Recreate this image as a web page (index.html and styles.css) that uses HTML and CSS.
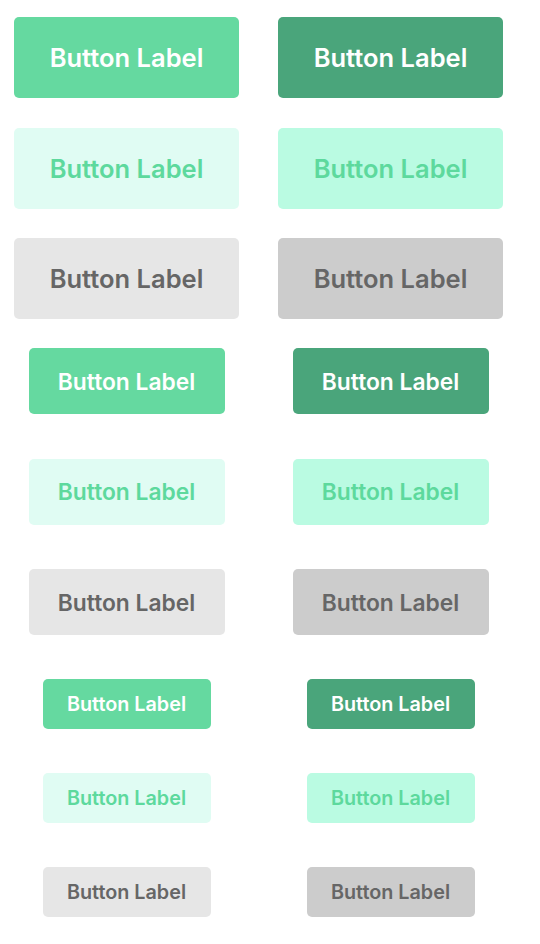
FILE: index.html
```html
<!DOCTYPE html>
<html lang="en">
<head>
  <meta charset="UTF-8" />
  <meta name="viewport" content="width=device-width, initial-scale=1.0"/>
  <title>Buttons</title>
  <link rel="stylesheet" href="styles.css">
</head>
<body>
  <div class="board">
    <div class="group large">
      <div class="row">
        <button class="btn primary">Button Label</button>
        <button class="btn primary pressed">Button Label</button>
      </div>
      <div class="row">
        <button class="btn soft">Button Label</button>
        <button class="btn soft pressed">Button Label</button>
      </div>
      <div class="row">
        <button class="btn grey">Button Label</button>
        <button class="btn grey pressed">Button Label</button>
      </div>
    </div>

    <div class="group medium">
      <div class="row">
        <button class="btn primary">Button Label</button>
        <button class="btn primary pressed">Button Label</button>
      </div>
      <div class="row">
        <button class="btn soft">Button Label</button>
        <button class="btn soft pressed">Button Label</button>
      </div>
      <div class="row">
        <button class="btn grey">Button Label</button>
        <button class="btn grey pressed">Button Label</button>
      </div>
    </div>

    <div class="group small">
      <div class="row">
        <button class="btn primary">Button Label</button>
        <button class="btn primary pressed">Button Label</button>
      </div>
      <div class="row">
        <button class="btn soft">Button Label</button>
        <button class="btn soft pressed">Button Label</button>
      </div>
      <div class="row">
        <button class="btn grey">Button Label</button>
        <button class="btn grey pressed">Button Label</button>
      </div>
    </div>
  </div>
</body>
</html>
```

FILE: styles.css
```css
body {
  margin: 0;
  background: #fff;
  font-family: Inter, "Noto Sans", sans-serif;
}
.board {
  padding: 17px 14px 0;
  display: flex;
  flex-direction: column;
  gap: 29px;
}
.group {
  display: flex;
  flex-direction: column;
}
.large { gap: 29.5px; }
.medium { gap: 44.5px; }
.small { gap: 44px; margin-top: 15px; }

.row {
  display: grid;
  grid-template-columns: 225px 225px;
  column-gap: 39px;
  justify-items: center;
}
.btn {
  border: none;
  border-radius: 5px;
  font-family: inherit;
  font-weight: 600;
  padding: 0;
  cursor: pointer;
}
.large .btn {
  width: 225px;
  height: 81px;
  font-size: 25.5px;
}
.medium .btn {
  width: 196px;
  height: 66px;
  font-size: 22.8px;
}
.small .btn {
  width: 168px;
  height: 50px;
  font-size: 19.8px;
}

.primary { background: #65d9a0; color: #fff; }
.primary.pressed { background: #4aa57b; }
.soft { background: #e0fcf3; color: #5dd99d; }
.soft.pressed { background: #bafbe2; }
.grey { background: #e6e6e6; color: #666; }
.grey.pressed { background: #cccccc; }
```
